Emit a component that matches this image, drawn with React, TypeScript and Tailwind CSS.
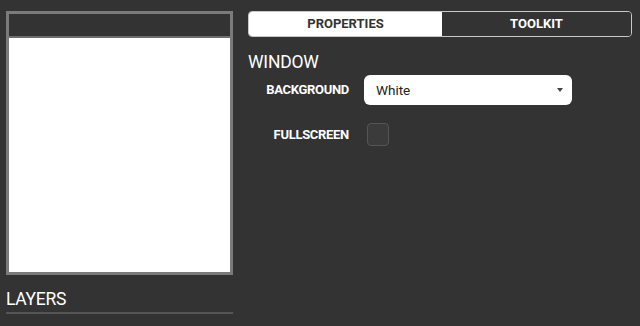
export default function App() {
  return (
    <div
      className="flex h-[326px] w-[640px] gap-[15px] bg-[#333333] pl-[6px] pt-[11px] text-white"
      style={{ fontFamily: 'Roboto, "Open Sans", sans-serif' }}
    >
      {/* left column: canvas preview + layers */}
      <div className="flex w-[227px] flex-col">
        <div className="flex h-[264px] flex-col border-[3px] border-[#7b7b7b]">
          <div className="h-[24px] border-b-2 border-[#6e6e6e] bg-[#333333]" />
          <div className="flex-1 bg-white" />
        </div>
        <div className="mt-[13px] text-[17.5px] leading-[22px] tracking-[-0.3px]">LAYERS</div>
        <div className="mt-[2px] h-[2px] bg-[#555555]" />
      </div>

      {/* right column: properties */}
      <div className="flex w-[384px] flex-col">
        <div className="flex h-[26px] overflow-hidden rounded-[4px] border border-[#c8c8c8]">
          <button className="w-[193px] bg-white text-[13px] font-bold text-[#333333]">PROPERTIES</button>
          <button className="flex-1 bg-[#333333] text-[13px] font-bold text-white">TOOLKIT</button>
        </div>
        <div className="mt-[14px] text-[17.5px] leading-[22px] tracking-[-0.2px]">WINDOW</div>
        <div className="mt-[2px] flex items-center">
          <div className="w-[101px] text-right text-[13px] font-bold tracking-[-0.3px]">BACKGROUND</div>
          <div className="ml-[15px] flex h-[30px] w-[208px] items-center justify-between rounded-[6px] bg-white pl-[12px] pr-[9px] text-[13.5px] text-[#222222]">
            <span>White</span>
            <svg width="6" height="4" viewBox="0 0 6 4">
              <path d="M0 0 L6 0 L3 4 Z" fill="#444444" />
            </svg>
          </div>
        </div>
        <div className="mt-[18px] flex items-center">
          <div className="w-[101px] text-right text-[13px] font-bold tracking-[-0.3px]">FULLSCREEN</div>
          <div className="ml-[18px] h-[23px] w-[22px] rounded-[4px] border border-[#555555] bg-[#3b3b3b]" />
        </div>
      </div>
    </div>
  );
}
